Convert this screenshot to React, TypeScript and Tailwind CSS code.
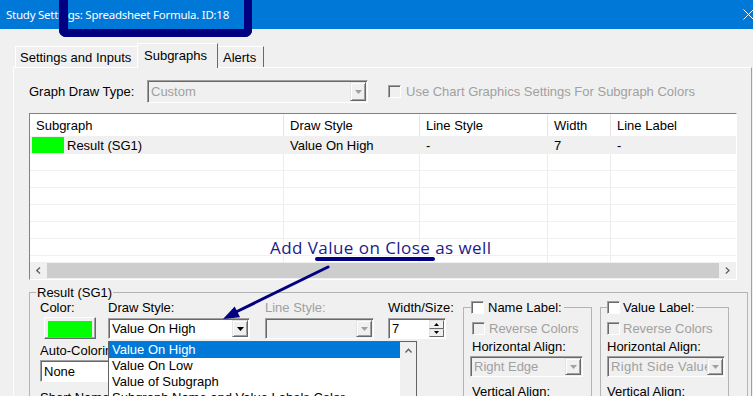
import React from "react";

function Tri({ color = "#000", up = false }: { color?: string; up?: boolean }) {
  return (
    <svg width="7" height="4" viewBox="0 0 7 4">
      <path d={up ? "M0 4h7L3.5 0z" : "M0 0h7L3.5 4z"} fill={color} />
    </svg>
  );
}

function Check({ disabled = false, className = "" }: { disabled?: boolean; className?: string }) {
  return (
    <span
      className={`inline-block h-[13px] w-[13px] shrink-0 border border-t-[#a0a0a0] border-l-[#a0a0a0] border-b-white border-r-white shadow-[inset_1px_1px_0_#696969] ${
        disabled ? "bg-[#f0f0f0]" : "bg-white"
      } ${className}`}
    />
  );
}

function Combo({
  text,
  className = "",
  disabled = false,
}: {
  text: string;
  className?: string;
  disabled?: boolean;
}) {
  return (
    <div
      className={`flex border border-t-[#a0a0a0] border-l-[#a0a0a0] border-b-white border-r-white shadow-[inset_1px_1px_0_#696969] ${
        disabled ? "bg-[#f0f0f0]" : "bg-white"
      } ${className}`}
    >
      <div
        className={`flex min-w-0 flex-1 items-center overflow-hidden whitespace-nowrap pl-[3px] ${
          disabled ? "text-[#a0a0a0]" : "text-black"
        }`}
      >
        {text}
      </div>
      <div className="my-[1px] mr-[1px] flex w-[16px] shrink-0 items-center justify-center border border-t-[#e3e3e3] border-l-[#e3e3e3] border-b-[#696969] border-r-[#696969] bg-[#f0f0f0] shadow-[inset_1px_1px_0_#fff,inset_-1px_-1px_0_#a0a0a0]">
        <Tri color={disabled ? "#a0a0a0" : "#000"} />
      </div>
    </div>
  );
}

function Chevron({ dir }: { dir: "left" | "right" | "up" }) {
  const d =
    dir === "left" ? "M4 0.5L0.8 3.5L4 6.5" : dir === "right" ? "M0.8 0.5L4 3.5L0.8 6.5" : "M0.5 4.5L3.5 1.2L6.5 4.5";
  const w = dir === "up" ? 7 : 5;
  const h = dir === "up" ? 6 : 7;
  return (
    <svg width={w} height={h} viewBox={`0 0 ${w} ${h}`}>
      <path d={d} fill="none" stroke="#606060" strokeWidth="1.3" />
    </svg>
  );
}

export default function App() {
  const emptyRows = [0, 1, 2, 3, 4, 5];
  return (
    <div className="relative h-[396px] w-[753px] overflow-hidden bg-[#f0f0f0] font-['Liberation_Sans',Arial,sans-serif] text-[13px] leading-[15px] text-black">
      {/* Title bar */}
      <div className="flex h-[29px] items-center justify-between bg-[#0078d7] pl-[6px] font-['Noto_Sans',sans-serif] text-[11.5px] tracking-[-0.25px] text-white">
        <span>Study Settings: Spreadsheet Formula. ID:18</span>
        <svg width="11" height="11" viewBox="0 0 11 11" className="mr-[-1px]">
          <path d="M0.5 0.5l10 10M10.5 0.5l-10 10" stroke="white" strokeWidth="1" />
        </svg>
      </div>

      {/* Tabs */}
      <div className="flex h-[38px] items-end pl-[15px]">
        <div className="flex h-[21px] w-[122px] items-center border-l border-t border-white pl-[4px]">
          Settings and Inputs
        </div>
        <div className="relative z-10 mb-[-1px] h-[25px] w-[81px] border-l border-r border-t border-l-white border-t-white border-r-[#696969] bg-[#f0f0f0] pl-[6px] pt-[4px]">
          Subgraphs
        </div>
        <div className="flex h-[21px] w-[46px] items-center border-r border-t border-t-white border-r-[#696969] pl-[5px]">
          Alerts
        </div>
      </div>

      {/* Tab panel */}
      <div className="ml-[13px] h-[329px] w-[739px] border-l border-r border-t border-l-white border-t-white border-r-[#a0a0a0] pl-[15px] pt-[12px]">
        {/* Graph draw type row */}
        <div className="flex h-[23px] items-center">
          <span className="w-[118px]">Graph Draw Type:</span>
          <Combo disabled text="Custom" className="h-[23px] w-[221px]" />
          <Check disabled className="ml-[20px]" />
          <span className="ml-[5px] text-[#a0a0a0]">Use Chart Graphics Settings For Subgraph Colors</span>
        </div>

        {/* List view */}
        <div className="mt-[10px] flex h-[167px] w-[708px] flex-col border border-t-[#828282] border-l-[#828282] border-b-white border-r-white bg-white">
          <div className="flex h-[22px] shrink-0 items-center">
            <div className="flex h-full w-[254px] items-center border-r border-[#e5e5e5] pl-[6px]">Subgraph</div>
            <div className="flex h-full w-[136px] items-center border-r border-[#e5e5e5] pl-[6px]">Draw Style</div>
            <div className="flex h-full w-[128px] items-center border-r border-[#e5e5e5] pl-[6px]">Line Style</div>
            <div className="flex h-full w-[63px] items-center border-r border-[#e5e5e5] pl-[6px]">Width</div>
            <div className="flex h-full flex-1 items-center pl-[6px]">Line Label</div>
          </div>
          <div className="h-[126px] overflow-hidden">
            <div className="flex h-[18px] items-center bg-[#f0f0f0]">
              <div className="flex h-full w-[254px] items-center pl-[2px]">
                <span className="h-[16px] w-[32px] bg-[#00ff00]" />
                <span className="ml-[3px]">Result (SG1)</span>
              </div>
              <div className="w-[136px] pl-[6px]">Value On High</div>
              <div className="w-[128px] pl-[6px]">-</div>
              <div className="w-[63px] pl-[6px]">7</div>
              <div className="flex-1 pl-[6px]">-</div>
            </div>
            {emptyRows.map((r) => (
              <div key={r} className="flex h-[17px] border-b border-[#f0f0f0]">
                <div className="w-[254px] border-r border-[#ececec]" />
                <div className="w-[136px] border-r border-[#ececec]" />
                <div className="w-[128px] border-r border-[#ececec]" />
                <div className="w-[63px] border-r border-[#ececec]" />
                <div className="flex-1" />
              </div>
            ))}
            <div className="flex h-[17px]">
              <div className="w-[254px] border-r border-[#ececec]" />
              <div className="w-[136px] border-r border-[#ececec]" />
              <div className="w-[128px] border-r border-[#ececec]" />
              <div className="w-[63px] border-r border-[#ececec]" />
              <div className="flex-1" />
            </div>
          </div>
          <div className="flex h-[17px] shrink-0 bg-[#f0f0f0]">
            <div className="flex w-[17px] items-center justify-center">
              <Chevron dir="left" />
            </div>
            <div className="my-[1px] flex-1 bg-[#cdcdcd]" />
            <div className="flex w-[17px] items-center justify-center">
              <Chevron dir="right" />
            </div>
          </div>
        </div>

        {/* Result group */}
        <fieldset className="mt-[5px] h-[200px] w-[719px] border border-[#b4b4b4] px-[6px] pb-0 pt-0">
          <legend className="px-[1px] leading-[15px]">Result (SG1)</legend>
          <div className="flex">
            <div className="w-[427px] pl-[4px]">
              <div className="flex h-[15px]">
                <span className="w-[68px]">Color:</span>
                <span className="w-[157px]">Draw Style:</span>
                <span className="w-[123px] text-[#a0a0a0]">Line Style:</span>
                <span>Width/Size:</span>
              </div>
              <div className="mt-[3px] flex h-[21px]">
                <div className="w-[68px]">
                  <div className="ml-[4px] mt-[-1px] h-[22px] w-[52px] border border-t-white border-l-white border-b-[#696969] border-r-[#696969] bg-[#f0f0f0] px-[3px] pb-[1px] pt-[3px] shadow-[inset_-1px_-1px_0_#a0a0a0]">
                    <div className="h-full w-full bg-[#00ff00]" />
                  </div>
                </div>
                <div className="w-[157px]">
                  <Combo text="Value On High" className="h-[21px] w-[142px]" />
                </div>
                <div className="w-[123px]">
                  <Combo disabled text="" className="h-[21px] w-[109px]" />
                </div>
                <div className="flex h-[21px] w-[58px] border border-t-[#a0a0a0] border-l-[#a0a0a0] border-b-white border-r-white bg-white shadow-[inset_1px_1px_0_#696969]">
                  <div className="flex flex-1 items-center pl-[3px]">7</div>
                  <div className="my-[1px] mr-[1px] flex w-[15px] flex-col">
                    <div className="flex flex-1 items-center justify-center border border-t-[#e3e3e3] border-l-[#e3e3e3] border-b-[#696969] border-r-[#696969] bg-[#f0f0f0]">
                      <svg width="5" height="3" viewBox="0 0 5 3">
                        <path d="M0 3h5L2.5 0z" fill="#000" />
                      </svg>
                    </div>
                    <div className="flex flex-1 items-center justify-center border border-t-[#e3e3e3] border-l-[#e3e3e3] border-b-[#696969] border-r-[#696969] bg-[#f0f0f0]">
                      <svg width="5" height="3" viewBox="0 0 5 3">
                        <path d="M0 0h5L2.5 3z" fill="#000" />
                      </svg>
                    </div>
                  </div>
                </div>
              </div>
              <div className="mt-[4px] h-[15px]">Auto-Coloring:</div>
              <Combo text="None" className="mt-[2px] h-[22px] w-[142px]" />
              <div className="mt-[8px] h-[15px]">Short Name:</div>
            </div>

            {/* Name Label group */}
            <fieldset className="h-[120px] w-[129px] border border-[#b4b4b4] pb-0 pl-[7px] pr-0 pt-0">
              <legend className="px-0 leading-[15px]">
                <span className="flex items-center gap-[4px] pr-[2px]">
                  <Check />
                  Name Label:
                </span>
              </legend>
              <div className="ml-[1px] mt-[6px] flex h-[15px] items-center gap-[4px] text-[#a0a0a0]">
                <Check disabled />
                Reverse Colors
              </div>
              <div className="ml-[1px] mt-[3px] h-[15px]">Horizontal Align:</div>
              <Combo disabled text="Right Edge" className="ml-[-1px] mt-[2px] h-[21px] w-[113px]" />
              <div className="ml-[1px] mt-[7px] h-[15px]">Vertical Align:</div>
            </fieldset>

            {/* Value Label group */}
            <fieldset className="ml-[8px] h-[120px] w-[129px] border border-[#b4b4b4] pb-0 pl-[6px] pr-0 pt-0">
              <legend className="px-0 leading-[15px]">
                <span className="flex items-center gap-[3px] pr-[2px]">
                  <Check />
                  Value Label:
                </span>
              </legend>
              <div className="mt-[6px] flex h-[15px] items-center gap-[3px] text-[#a0a0a0]">
                <Check disabled />
                Reverse Colors
              </div>
              <div className="mt-[3px] h-[15px]">Horizontal Align:</div>
              <Combo disabled text="Right Side Value" className="mt-[2px] h-[21px] w-[118px] tracking-[0.3px]" />
              <div className="mt-[7px] h-[15px]">Vertical Align:</div>
            </fieldset>
          </div>
        </fieldset>
      </div>

      {/* Open dropdown list */}
      <div className="absolute left-[108px] top-[341px] flex h-[70px] w-[309px] border border-[#646464] bg-white">
        <div className="flex-1 whitespace-nowrap">
          <div className="h-[16px] bg-[#0078d7] pl-[3px] leading-[16px] text-white">Value On High</div>
          <div className="h-[16px] pl-[3px] leading-[16px]">Value On Low</div>
          <div className="h-[16px] pl-[3px] leading-[16px]">Value of Subgraph</div>
          <div className="h-[16px] pl-[3px] leading-[16px]">Subgraph Name and Value Labels Color</div>
        </div>
        <div className="flex w-[16px] justify-center bg-[#f0f0f0] pt-[6px]">
          <Chevron dir="up" />
        </div>
      </div>

      {/* Annotation: navy frame on title */}
      <div className="absolute left-[59px] top-0 h-[37px] w-[193px] rounded-b-[7px] border-b-[8px] border-l-[9px] border-r-[8px] border-[#000080]" />

      {/* Annotation text */}
      <div className="absolute left-[270px] top-[239px] whitespace-nowrap font-['Open_Sans',sans-serif] text-[17px] leading-none tracking-[0.45px] text-[#1b1b8a]">
        Add Value on Close as well
      </div>
      <svg className="pointer-events-none absolute left-0 top-0" width="753" height="396" viewBox="0 0 753 396">
        <line x1="317" y1="259" x2="433" y2="259" stroke="#000080" strokeWidth="4" strokeLinecap="round" />
        <line x1="328" y1="267" x2="236" y2="312" stroke="#000080" strokeWidth="3" strokeLinecap="round" />
        <polygon points="223,319 240.1,317.3 234.7,306.5" fill="#000080" />
      </svg>
    </div>
  );
}
